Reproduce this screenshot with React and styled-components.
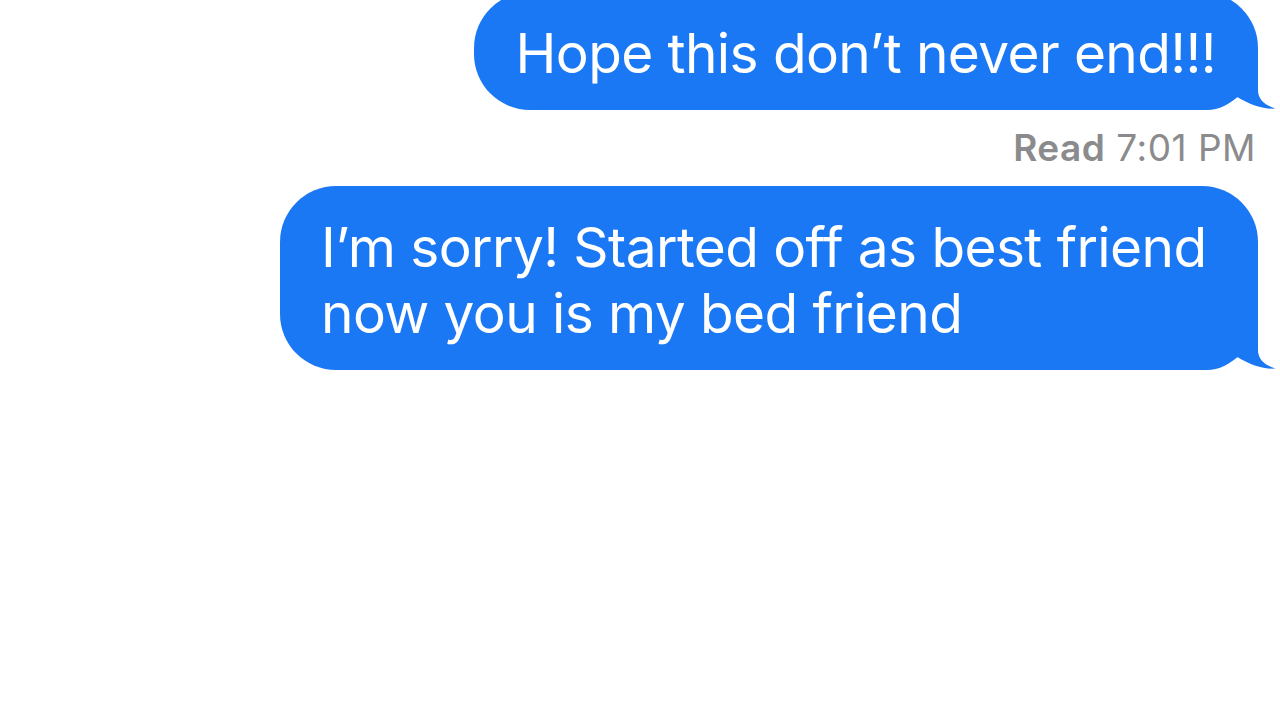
import React from 'react'
import styled, { createGlobalStyle } from 'styled-components'

const GlobalStyle = createGlobalStyle`
html, body {
  margin: 0;
  padding: 0;
  background: #ffffff;
  overflow: hidden;
}
`

const Screen = styled.div`
width: 1280px;
height: 720px;
background: #ffffff;
display: flex;
flex-direction: column;
align-items: flex-end;
padding-right: 22px;
box-sizing: border-box;
font-family: Inter, "Noto Sans", sans-serif;
font-feature-settings: "liga" 0, "calt" 0;
overflow: hidden;
`

const Bubble = styled.div`
position: relative;
background: #1a78f4;
color: #ffffff;
font-size: 55px;
line-height: 66px;
letter-spacing: -0.6px;
padding: 28px 42px 24px 41px;
border-radius: 56px;
max-width: 895px;
margin-top: ${props => props.top || 0}px;
`

const BubbleText = styled.span`
position: relative;
z-index: 1;
`

const Tail = styled.svg`
position: absolute;
right: -20px;
bottom: 0;
width: 80px;
height: 60px;
overflow: visible;
`

const Receipt = styled.div`
margin-top: 16px;
margin-right: 2px;
font-size: 37px;
line-height: 44px;
color: #8b8b8e;
letter-spacing: 0.5px;

b {
  font-weight: 600;
}
`

const BubbleTail = () => (
  <Tail viewBox="0 0 80 60">
    <path
      d="M0,60 L0,0 L60,0 L60,40 C60,49 66,55 77.5,58.5 C66,59.5 52,55 38.5,46.5 C32,54 22,60 8,60 Z"
      fill="#1a78f4"
    />
  </Tail>
)

const Message = ({ children, top }) => (
  <Bubble top={top}>
    <BubbleTail />
    <BubbleText>{children}</BubbleText>
  </Bubble>
)

export default function App() {
  return (
    <>
      <GlobalStyle />
      <Screen>
        <Message top={-8}>Hope this don’t never end!!!</Message>
        <Receipt><b>Read</b> 7:01 PM</Receipt>
        <Message top={16}>I’m sorry! Started off as best friend now you is my bed friend</Message>
      </Screen>
    </>
  )
}
